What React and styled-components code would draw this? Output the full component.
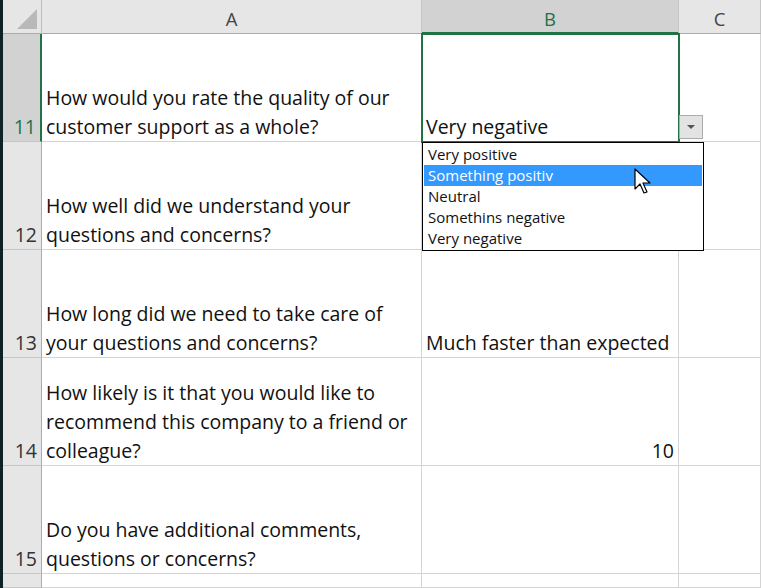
import { Fragment } from "react";
import styled, { createGlobalStyle } from "styled-components";

const Global = createGlobalStyle`
  body { margin: 0; background: #fff; font-family: "Open Sans", "Noto Sans", sans-serif; overflow: hidden; }
`;

const Sheet = styled.div`
  position: relative;
  width: 761px;
  height: 588px;
  border-left: 3px solid #0f2226;
  box-sizing: border-box;
  display: grid;
  grid-template-columns: 39px 380px 257px 82px;
  grid-template-rows: 34px repeat(5, 108px) 14px;
  overflow: hidden;
`;

const Corner = styled.div`
  background: #e6e6e6;
  border-right: 1px solid #bdbdbd;
  border-bottom: 1px solid #ababab;
  position: relative;
  &::after {
    content: "";
    position: absolute;
    right: 4px;
    bottom: 4px;
    border-left: 20px solid transparent;
    border-bottom: 20px solid #b9b9b9;
  }
`;

const ColHead = styled.div`
  background: ${(p) => (p.$sel ? "#d2d2d2" : "#e6e6e6")};
  color: ${(p) => (p.$sel ? "#217346" : "#444")};
  border-right: 1px solid #c6c6c6;
  border-bottom: ${(p) => (p.$sel ? "2px solid #217346" : "1px solid #ababab")};
  display: flex;
  align-items: center;
  justify-content: center;
  font-size: 18.5px;
  padding-top: 4px;
  box-sizing: border-box;
`;

const RowHead = styled.div`
  background: ${(p) => (p.$sel ? "#d2d2d2" : "#e6e6e6")};
  color: ${(p) => (p.$sel ? "#217346" : "#333")};
  border-right: ${(p) => (p.$sel ? "2px solid #217346" : "1px solid #ababab")};
  border-bottom: 1px solid #c6c6c6;
  display: flex;
  align-items: flex-end;
  justify-content: flex-end;
  padding: 0 4px 0 0;
  font-size: 19.5px;
  line-height: 29px;
  box-sizing: border-box;
`;

const Cell = styled.div`
  border-right: 1px solid #d4d4d4;
  border-bottom: 1px solid #d4d4d4;
  display: flex;
  align-items: flex-end;
  justify-content: ${(p) => (p.$right ? "flex-end" : "flex-start")};
  padding: 0 4px 0 4px;
  font-size: 19.5px;
  line-height: 29px;
  color: #111;
  box-sizing: border-box;
  ${(p) => p.$sel && "outline: 2px solid #217346; outline-offset: -1px; position: relative;"}
`;

const Question = styled.div`
  width: 370px;
`;

const DropButton = styled.div`
  position: absolute;
  left: 676px;
  top: 115px;
  width: 24px;
  height: 24px;
  background: #e3e3e3;
  border: 1px solid #ababab;
  box-sizing: border-box;
  display: flex;
  align-items: center;
  justify-content: center;
  &::after {
    content: "";
    border-left: 4px solid transparent;
    border-right: 4px solid transparent;
    border-top: 4px solid #555;
  }
`;

const List = styled.div`
  position: absolute;
  left: 419px;
  top: 142px;
  width: 282px;
  border: 1px solid #000;
  background: #fff;
  padding: 1px 0;
  box-sizing: border-box;
`;

const Item = styled.div`
  height: 21px;
  line-height: 21px;
  padding-left: 4px;
  margin: 0 1px;
  font-size: 15px;
  background: ${(p) => (p.$hi ? "#3399ff" : "transparent")};
  color: ${(p) => (p.$hi ? "#fff" : "#111")};
`;

const Cursor = styled.svg`
  position: absolute;
  left: 631px;
  top: 168px;
`;

const rows = [
  ["11", "How would you rate the quality of our customer support as a whole?", "Very negative"],
  ["12", "How well did we understand your questions and concerns?", ""],
  ["13", "How long did we need to take care of your questions and concerns?", "Much faster than expected"],
  ["14", "How likely is it that you would like to recommend this company to a friend or colleague?", "10"],
  ["15", "Do you have additional comments, questions or concerns?", ""],
];

export default function App() {
  return (
    <>
      <Global />
      <Sheet>
        <Corner />
        <ColHead>A</ColHead>
        <ColHead $sel>B</ColHead>
        <ColHead>C</ColHead>
        {rows.map(([n, q, a]) => (
          <Fragment key={n}>
            <RowHead $sel={n === "11"}>{n}</RowHead>
            <Cell>
              <Question>{q}</Question>
            </Cell>
            <Cell $sel={n === "11"} $right={n === "14"}>{a}</Cell>
            <Cell />
          </Fragment>
        ))}
        <RowHead />
        <Cell />
        <Cell />
        <Cell />
        <DropButton />
        <List>
          <Item>Very positive</Item>
          <Item $hi>Something positiv</Item>
          <Item>Neutral</Item>
          <Item>Somethins negative</Item>
          <Item>Very negative</Item>
        </List>
        <Cursor width="20" height="28" viewBox="0 0 20 28">
          <path d="M1 1 L1 21 L6 16 L10 25 L13 24 L9 15 L16 15 Z" fill="#fff" stroke="#000" strokeWidth="1.2" strokeLinejoin="round" />
        </Cursor>
      </Sheet>
    </>
  );
}
